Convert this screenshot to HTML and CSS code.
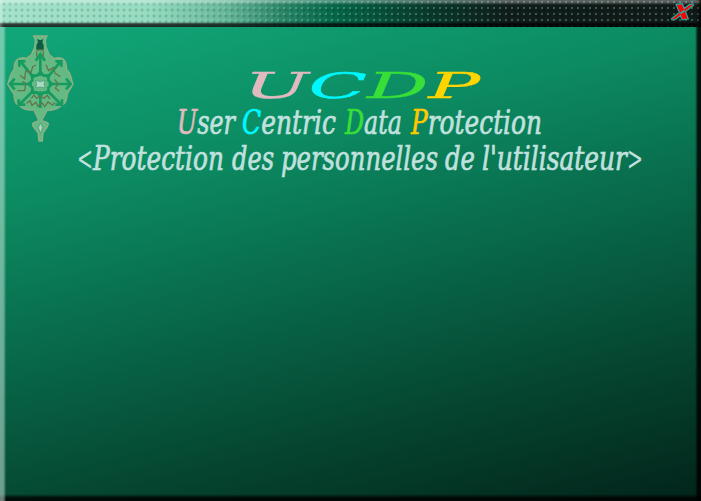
FILE: index.html
```html
<!DOCTYPE html>
<html lang="fr">
<head>
<meta charset="utf-8">
<title>UCDP</title>
<link rel="stylesheet" href="styles.css">
</head>
<body>
<div class="window">
  <header class="titlebar">
    <button class="close" aria-label="Close">
      <svg width="24" height="18" viewBox="0 0 24 18"><path class="glow" d="M6 2l5-.6 5.500 14.200-5 .6zM22.500 1.500l-4 .7L.5 16.400l4-.7z"/><path class="cross" d="M6 2l5-.6 5.500 14.200-5 .6zM22.500 1.500l-4 .7L.5 16.400l4-.7z"/></svg>
    </button>
  </header>
  <main class="content">
    <svg class="emblem" width="72" height="116" viewBox="20 24 216 348">
      <path class="shape" d="M103 30h40l-5 12 2 20 10 24 15 12C180 92 194 96 198 108C202 118 200 122 203 132C216 140 214 158 221 174C214 188 208 194 204 204C203 222 198 236 184 240C170 252 156 254 144 252L127 283C134 289 146 286 147 294C146 304 138 310 131 321L129 345H119L116 321C109 310 100 304 99 294C102 286 113 289 118 283L104 252C88 254 74 252 62 240C48 236 44 222 44 204C36 194 32 188 25 174C32 158 32 140 44 132C44 122 44 116 48 108C54 96 68 92 82 97L96 86 106 64 108 42z"/>
      <g class="veins">
        <path d="M123 150V84m0 112v50M98 174H34m50 0M148 174h64M104 156L66 110m77 46l38-46M104 192l-42 42m80-42l42 42"/>
        <path d="M109 104l14-20 14 20M46 158l-14 16 14 16M200 158l14 16-14 16M60 122V106h18M186 122v-16h-18M58 220v16h20M188 220v16h-20"/>
        <path d="M123 138l10 11 15-1-1 15 11 11-11 11 1 15-15-1-10 11-10-11-15 1 1-15-11-11 11-11-1-15 15 1z"/>
      </g>
      <path class="script" d="M62 148l14 11 3-24 16 5 5-18 10-5M54 194h22l3-22-10-6M140 116l8 18 15-10 4 18 16 10M166 160l10 14-8 12 12 10M96 217l8-10 8 10 10-7 12 7 10-9 8 11M82 232l10-8 6 14 12-9 6 12 12-11 8 12 10-14 14 9 6-8"/>
      <path class="gem" d="M109 163l14 4 14-4-3 11 3 12-14-3-14 3 3-12zM123 291l7 13-6 18-7-17z"/>
      <path class="crown" d="M111 58l5-10-3-9 10 4 9-4-3 10 4 9v14h-22z"/>
      <path class="script" d="M112 76v16m20-16v16M113 72h20"/>
    </svg>
    <svg class="heading" width="580" height="130" viewBox="0 0 580 130">
      <g class="acronym">
        <text x="172" y="39.500" textLength="236" lengthAdjust="spacingAndGlyphs"><tspan class="u">U</tspan><tspan class="c">C</tspan><tspan class="d">D</tspan><tspan class="p">P</tspan></text>
      </g>
      <g class="line">
        <text x="105" y="75.500" textLength="58" lengthAdjust="spacingAndGlyphs"><tspan class="u">U</tspan>ser</text>
        <text x="170" y="75.500" textLength="94" lengthAdjust="spacingAndGlyphs"><tspan class="c">C</tspan>entric</text>
        <text x="273" y="75.500" textLength="57" lengthAdjust="spacingAndGlyphs"><tspan class="d">D</tspan>ata</text>
        <text x="339" y="75.500" textLength="131" lengthAdjust="spacingAndGlyphs"><tspan class="p">P</tspan>rotection</text>
        <text class="angle" x="5" y="111.500" textLength="16" lengthAdjust="spacingAndGlyphs">&lt;</text>
        <text x="21" y="111.500" textLength="131" lengthAdjust="spacingAndGlyphs">Protection</text>
        <text x="160" y="111.500" textLength="42" lengthAdjust="spacingAndGlyphs">des</text>
        <text x="209" y="111.500" textLength="157" lengthAdjust="spacingAndGlyphs">personnelles</text>
        <text x="373" y="111.500" textLength="30" lengthAdjust="spacingAndGlyphs">de</text>
        <text x="410" y="111.500" textLength="145" lengthAdjust="spacingAndGlyphs">l'utilisateur</text>
        <text class="angle" x="555" y="111.500" textLength="16" lengthAdjust="spacingAndGlyphs">&gt;</text>
      </g>
    </svg>
  </main>
</div>
</body>
</html>
```
FILE: styles.css
```css
* { box-sizing: border-box; }
body { margin: 0; overflow: hidden; }

.window {
  width: 701px;
  height: 501px;
  display: flex;
  flex-direction: column;
}

.titlebar {
  height: 27px;
  flex: none;
  display: flex;
  justify-content: flex-end;
  padding: 3px 6px 0 0;
  background:
    linear-gradient(90deg, rgba(255,255,255,.3), transparent 4px calc(100% - 5px), #000b),
    linear-gradient(rgba(255,255,255,.32), rgba(255,255,255,.3) 2px, transparent 5px, transparent 22px, rgba(0,0,0,.72) 24px, rgba(0,0,0,.8)),
    radial-gradient(circle at 2px 2px, rgba(160,220,200,.3) 0 .8px, transparent 1.5px) 0 0 / 6px 6px,
    radial-gradient(circle at 2px 2px, rgba(0,0,0,.14) 0 1px, transparent 2px) 2px 2px / 6px 6px,
    linear-gradient(90deg, #a4e4cc 0, #94dcc0 150px, #68b89b 225px, #298567 285px, #056748 335px, #07563e 370px, #0a3a2c 430px, #101d1a 510px, #111a18);
}

.close {
  width: 24px;
  height: 18px;
  padding: 0;
  border: 0;
  background: none;
}
.close svg { display: block; overflow: visible; }
.glow { fill: #2ba79d; stroke: #2ba79d; stroke-width: 2.4; filter: blur(.7px); }
.cross { fill: #f00; }

.content {
  flex: 1;
  display: flex;
  align-items: flex-start;
  padding: 7px 0 0 6px;
  background:
    linear-gradient(90deg, rgba(205,235,222,.52) 0 3px, rgba(205,235,222,.25) 5px, transparent 6px, transparent calc(100% - 6px), rgba(0,0,0,.85) calc(100% - 3px)),
    linear-gradient(transparent calc(100% - 7px), rgba(0,0,0,.85) calc(100% - 3px)),
    linear-gradient(166deg, #11a879 0%, #0c8960 29%, #08684a 52%, #05442f 77%, #02241a 100%);
}

.emblem { flex: none; margin-right: -6px; filter: blur(.4px); }
.shape { fill: #65b982; stroke: #8faf88; stroke-width: 4; }
.veins { fill: none; stroke: #159b60; stroke-width: 8; }
.script { fill: none; stroke: #62784c; stroke-width: 4; }
.gem { fill: #a9dac3; stroke: #48936e; stroke-width: 2; }
.crown { fill: #0d5b40; }

.heading {
  flex: none;
  margin-top: 24px;
  overflow: visible;
  font-family: "DejaVu Serif Condensed", "DejaVu Serif", serif;
  font-style: italic;
  fill: #c1e1df;
}
.acronym { font-family: "DejaVu Serif", serif; font-size: 35px; }
.line { font-size: 34px; stroke: #c1e1df; stroke-width: .7px; }
.line .angle { stroke: none; }
.u { fill: #e1bac0; stroke: #e1bac0; }
.c { fill: #00f7ff; stroke: #00f7ff; }
.d { fill: #39df39; stroke: #39df39; }
.p { fill: #ffd500; stroke: #ffd500; }
.acronym tspan { stroke-width: .4px; }
.line .p { fill: #ffc800; stroke: #ffc800; }
```
